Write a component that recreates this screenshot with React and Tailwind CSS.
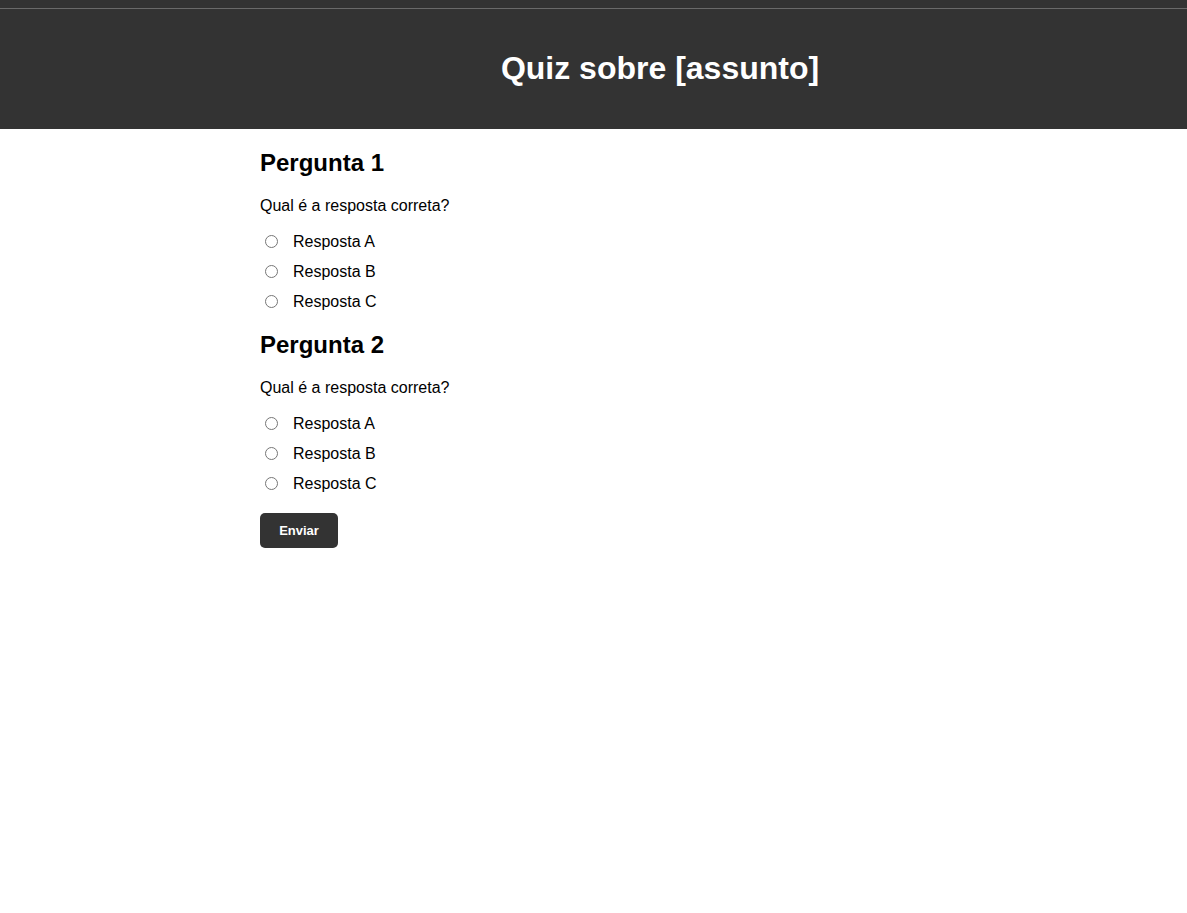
export default function App() {
  const questions = ["Pergunta 1", "Pergunta 2"];
  const options = ["Resposta A", "Resposta B", "Resposta C"];
  return (
    <div className="min-h-[913px] bg-white text-black" style={{ fontFamily: '"Liberation Sans", Arial, sans-serif' }}>
      <header className="h-[129px] bg-[#333333] flex flex-col">
        <div className="h-[8px]" />
        <div className="h-[1px] bg-[#6a6a6a]" />
        <div className="ml-[260px] w-[800px] mt-[41px] text-center">
          <h1 className="text-[32px] leading-[36px] font-bold text-white">Quiz sobre [assunto]</h1>
        </div>
      </header>
      <main className="ml-[260px] flex flex-col">
        {questions.map((q, qi) => (
          <section key={q} className={qi === 0 ? "mt-[20px]" : "mt-[14px]"}>
            <h2 className="text-[24px] leading-[28px] font-bold">{q}</h2>
            <p className="mt-[20px] text-[16px] leading-[18px]">Qual é a resposta correta?</p>
            <div className="mt-[12px] flex flex-col">
              {options.map((o) => (
                <label key={o} className="h-[30px] flex items-center text-[16px]">
                  <input type="radio" name={`q${qi}`} className="ml-[5px] mr-[15px] w-[13px] h-[13px] m-0 -translate-y-[1px]" />
                  <span>{o}</span>
                </label>
              ))}
            </div>
          </section>
        ))}
        <div className="mt-[14px]">
          <button className="w-[78px] h-[35px] rounded-[5px] bg-[#333333] text-white text-[13px] font-bold">Enviar</button>
        </div>
      </main>
    </div>
  );
}
